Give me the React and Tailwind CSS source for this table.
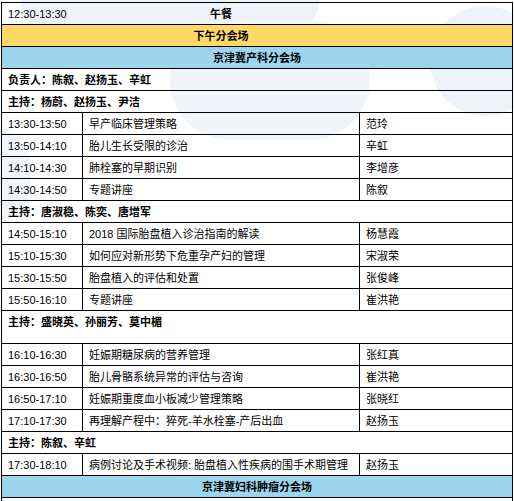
const sessions = [
  { type: "talk", time: "13:30-13:50", title: "早产临床管理策略", who: "范玲" },
  { type: "talk", time: "13:50-14:10", title: "胎儿生长受限的诊治", who: "辛虹" },
  { type: "talk", time: "14:10-14:30", title: "肺栓塞的早期识别", who: "李增彦" },
  { type: "talk", time: "14:30-14:50", title: "专题讲座", who: "陈叙" },
  { type: "host", text: "主持：唐淑稳、陈奕、唐增军" },
  { type: "talk", time: "14:50-15:10", title: "2018 国际胎盘植入诊治指南的解读", who: "杨慧霞" },
  { type: "talk", time: "15:10-15:30", title: "如何应对新形势下危重孕产妇的管理", who: "宋淑荣" },
  { type: "talk", time: "15:30-15:50", title: "胎盘植入的评估和处置", who: "张俊峰" },
  { type: "talk", time: "15:50-16:10", title: "专题讲座", who: "崔洪艳" },
  { type: "host", text: "主持：盛晓英、孙丽芳、莫中楣", tall: true },
  { type: "talk", time: "16:10-16:30", title: "妊娠期糖尿病的营养管理", who: "张红真" },
  { type: "talk", time: "16:30-16:50", title: "胎儿骨骼系统异常的评估与咨询", who: "崔洪艳" },
  { type: "talk", time: "16:50-17:10", title: "妊娠期重度血小板减少管理策略", who: "张晓红" },
  { type: "talk", time: "17:10-17:30", title: "再理解产程中：猝死-羊水栓塞-产后出血", who: "赵扬玉" },
  { type: "host", text: "主持：陈叙、辛虹" },
  { type: "talk", time: "17:30-18:10", title: "病例讨论及手术视频: 胎盘植入性疾病的围手术期管理", who: "赵扬玉" },
];

const cell = "border border-black px-[6px] h-[22px] align-middle whitespace-nowrap";

export default function App() {
  return (
    <div
      className="relative w-[514px] h-[501px] overflow-hidden bg-white text-[11px] leading-[14px] text-black"
      style={{ fontFamily: '"Liberation Sans", "Noto Sans CJK SC", sans-serif' }}
    >
      {/* faint bubble background */}
      <div className="absolute left-[108px] top-[-14px] w-[24px] h-[20px] rounded-full bg-[#7fb6e8]" />
      <div className="absolute left-[20px] top-[-60px] w-[300px] h-[110px] rounded-full bg-[#eef3fa]" />
      <div className="absolute left-[170px] top-[20px] w-[200px] h-[120px] rounded-full bg-[#f1f4f9]" />
      <div className="absolute left-[430px] top-[6px] w-[110px] h-[110px] rounded-full bg-[#eef3f9]" />
      <div className="absolute left-[-40px] top-[130px] w-[70px] h-[90px] rounded-full bg-[#f0f5fb]" />

      <table className="relative mt-[2px] ml-[1px] w-[511px] table-fixed border-collapse">
        <colgroup>
          <col className="w-[81px]" />
          <col className="w-[277px]" />
          <col className="w-[153px]" />
        </colgroup>
        <tbody>
          <tr>
            <td className="border-l border-t border-b border-black px-[6px] h-[22px] align-middle">12:30-13:30</td>
            <td className="border-t border-b border-black h-[22px] text-center font-bold">午餐</td>
            <td className="border-r border-t border-b border-black h-[22px]" />
          </tr>
          <tr className="bg-[#ffd966]">
            <td className="border-l border-b border-black h-[22px]" />
            <td className="border-b border-black h-[22px] text-center font-bold">下午分会场</td>
            <td className="border-r border-b border-black h-[22px]" />
          </tr>
          <tr className="bg-[#9dd5ef]">
            <td colSpan={3} className={`${cell} text-center font-bold`}>京津冀产科分会场</td>
          </tr>
          <tr>
            <td colSpan={3} className={`${cell} font-bold`}>负责人：陈叙、赵扬玉、辛虹</td>
          </tr>
          <tr>
            <td colSpan={3} className={`${cell} font-bold`}>主持：杨蔚、赵扬玉、尹洁</td>
          </tr>
          {sessions.map((s, i) =>
            s.type === "host" ? (
              <tr key={i}>
                <td
                  colSpan={3}
                  className={`border border-black px-[6px] whitespace-nowrap font-bold ${
                    s.tall ? "h-[33px] align-top pt-[4px]" : "h-[22px] align-middle"
                  }`}
                >
                  {s.text}
                </td>
              </tr>
            ) : (
              <tr key={i}>
                <td className={cell}>{s.time}</td>
                <td className={cell}>{s.title}</td>
                <td className={cell}>{s.who}</td>
              </tr>
            )
          )}
          <tr className="bg-[#9dd5ef]">
            <td colSpan={3} className={`${cell} text-center font-bold`}>京津冀妇科肿瘤分会场</td>
          </tr>
          <tr>
            <td colSpan={3} className={cell}>&nbsp;</td>
          </tr>
        </tbody>
      </table>
    </div>
  );
}
